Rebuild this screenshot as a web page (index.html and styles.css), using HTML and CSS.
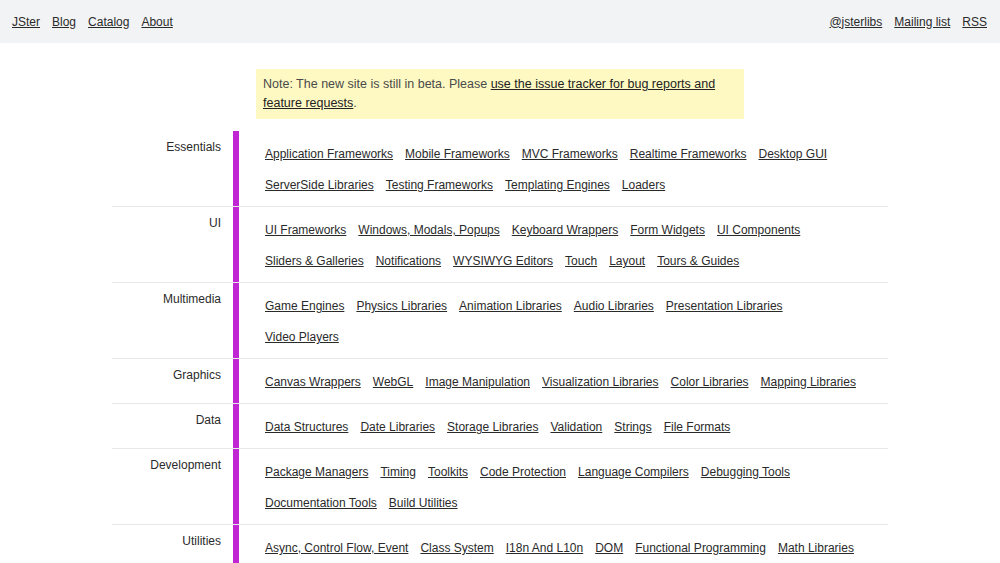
FILE: index.html
```html
<!DOCTYPE html>
<html>
<head>
<meta charset="utf-8">
<title>JSter</title>
<link rel="stylesheet" href="styles.css">
</head>
<body>
<header class="topbar">
  <nav class="nav">
    <a href="#">JSter</a>
    <a href="#">Blog</a>
    <a href="#">Catalog</a>
    <a href="#">About</a>
  </nav>
  <nav class="nav">
    <a href="#">@jsterlibs</a>
    <a href="#">Mailing list</a>
    <a href="#">RSS</a>
  </nav>
</header>
<main class="main">
  <div class="note">Note: The new site is still in beta. Please <a href="#">use the issue tracker for bug reports and feature requests</a>.</div>
  <div class="catalog">
    <div class="row">
      <div class="label">Essentials</div>
      <div class="links">
        <a href="#">Application Frameworks</a><a href="#">Mobile Frameworks</a><a href="#">MVC Frameworks</a><a href="#">Realtime Frameworks</a><a href="#">Desktop GUI</a><a href="#">ServerSide Libraries</a><a href="#">Testing Frameworks</a><a href="#">Templating Engines</a><a href="#">Loaders</a>
      </div>
    </div>
    <div class="row">
      <div class="label">UI</div>
      <div class="links">
        <a href="#">UI Frameworks</a><a href="#">Windows, Modals, Popups</a><a href="#">Keyboard Wrappers</a><a href="#">Form Widgets</a><a href="#">UI Components</a><a href="#">Sliders &amp; Galleries</a><a href="#">Notifications</a><a href="#">WYSIWYG Editors</a><a href="#">Touch</a><a href="#">Layout</a><a href="#">Tours &amp; Guides</a>
      </div>
    </div>
    <div class="row">
      <div class="label">Multimedia</div>
      <div class="links">
        <a href="#">Game Engines</a><a href="#">Physics Libraries</a><a href="#">Animation Libraries</a><a href="#">Audio Libraries</a><a href="#">Presentation Libraries</a><a href="#">Video Players</a>
      </div>
    </div>
    <div class="row">
      <div class="label">Graphics</div>
      <div class="links">
        <a href="#">Canvas Wrappers</a><a href="#">WebGL</a><a href="#">Image Manipulation</a><a href="#">Visualization Libraries</a><a href="#">Color Libraries</a><a href="#">Mapping Libraries</a>
      </div>
    </div>
    <div class="row">
      <div class="label">Data</div>
      <div class="links">
        <a href="#">Data Structures</a><a href="#">Date Libraries</a><a href="#">Storage Libraries</a><a href="#">Validation</a><a href="#">Strings</a><a href="#">File Formats</a>
      </div>
    </div>
    <div class="row">
      <div class="label">Development</div>
      <div class="links">
        <a href="#">Package Managers</a><a href="#">Timing</a><a href="#">Toolkits</a><a href="#">Code Protection</a><a href="#">Language Compilers</a><a href="#">Debugging Tools</a><a href="#">Documentation Tools</a><a href="#">Build Utilities</a>
      </div>
    </div>
    <div class="row">
      <div class="label">Utilities</div>
      <div class="links">
        <a href="#">Async, Control Flow, Event</a><a href="#">Class System</a><a href="#">I18n And L10n</a><a href="#">DOM</a><a href="#">Functional Programming</a><a href="#">Math Libraries</a>
      </div>
    </div>
  </div>
</main>
</body>
</html>
```
FILE: styles.css
```css
html, body {
  margin: 0;
  padding: 0;
}
body {
  font-family: "Liberation Sans", Arial, sans-serif;
  font-size: 12px;
  color: #2a2a2a;
  background: #fff;
}
a {
  color: #2a2a2a;
  text-decoration: underline;
}
.topbar {
  height: 43px;
  background: #f2f3f5;
  display: flex;
  justify-content: space-between;
  align-items: center;
  padding: 0 13px 0 12px;
}
.nav {
  display: flex;
  gap: 12px;
  font-size: 12px;
}
.main {
  display: flex;
  flex-direction: column;
  align-items: center;
  padding-top: 26px;
}
.note {
  width: 488px;
  box-sizing: border-box;
  background: #fef9c3;
  color: #4a4a4a;
  padding: 6px 7px;
  line-height: 19px;
  font-size: 12.5px;
}
.note a {
  color: #222;
}
.catalog {
  width: 776px;
  margin-top: 12px;
}
.row {
  display: flex;
  border-bottom: 1px solid #e8e8ea;
}
.label {
  width: 121px;
  box-sizing: border-box;
  padding: 8px 12px 0 0;
  text-align: right;
  line-height: 16px;
  flex-shrink: 0;
}
.links {
  flex: 1;
  border-left: 6px solid #c026d3;
  padding: 8px 20px 5px 26px;
  display: flex;
  flex-wrap: wrap;
  column-gap: 12px;
  line-height: 31px;
}
```
